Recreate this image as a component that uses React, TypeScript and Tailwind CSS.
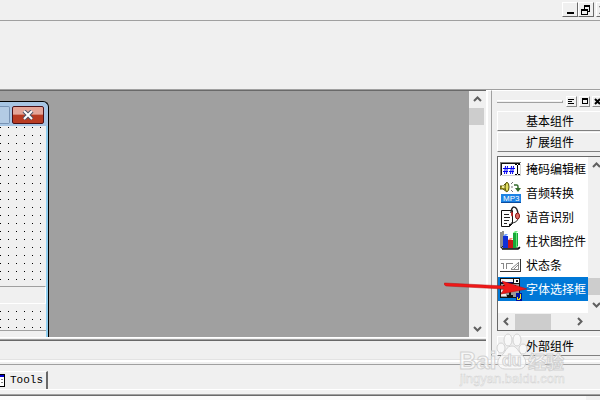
import type { ReactNode } from "react";

const raised =
  "border border-t-white border-l-white border-r-[#696969] border-b-[#696969]";
const cjk = "font-['Noto_Sans_CJK_SC','Liberation_Sans',sans-serif]";

function WindowButton({ label, children }: { label: string; children: ReactNode }) {
  return (
    <button
      aria-label={label}
      className={`flex h-[15px] w-4 shrink-0 items-center justify-center bg-[#f0f0f0] ${raised}`}
    >
      {children}
    </button>
  );
}

function PanelButton({ label, children }: { label: string; children: ReactNode }) {
  return (
    <button
      aria-label={label}
      className="flex h-[11px] w-[11px] shrink-0 items-center justify-center border border-t-white border-l-white border-r-[#8a8a8a] border-b-[#8a8a8a]"
    >
      {children}
    </button>
  );
}

type Direction = "up" | "down" | "left" | "right";

const chevrons: Record<Direction, string> = {
  up: "M1 6l3.5-3.5L8 6",
  down: "M1 3l3.5 3.5L8 3",
  left: "M6 1L2.5 4.5L6 8",
  right: "M3 1l3.5 3.5L3 8",
};

function ScrollArrow({ direction }: { direction: Direction }) {
  return (
    <button
      aria-label={`Scroll ${direction}`}
      className="flex h-[17px] w-[17px] shrink-0 items-center justify-center"
    >
      <svg width="9" height="9" viewBox="0 0 9 9" fill="none" stroke="#606060" strokeWidth="2">
        <path d={chevrons[direction]} />
      </svg>
    </button>
  );
}

function MaskIcon() {
  return (
    <svg width="22" height="20" viewBox="0 0 22 20" shapeRendering="crispEdges">
      <path d="M1 4h20v13H1z" fill="#fff" />
      <path d="M0 3.500h21M.5 3v14" fill="none" stroke="#808080" />
      <path d="M1 4.500h19M1.500 4v12" fill="none" stroke="#111" />
      <path d="M2 16.500h19M20.500 5v12" stroke="#d4d4d4" />
      <path
        d="M5.500 7l-1 8M7.500 7l-1 8M3 9.500h6M3 12.500h5M11.500 7l-1 8M13.500 7l-1 8M9 9.500h6M9 12.500h5"
        stroke="#0000f0"
        shapeRendering="auto"
      />
      <path d="M15 5.500h2M18 5.500h2M17.500 6v9M15 15.500h2M18 15.500h2" stroke="#000" />
    </svg>
  );
}

function AudioIcon() {
  return (
    <svg width="22" height="22" viewBox="0 0 22 22">
      <path d="M0 4h3l4-4v10L3 7H0z" fill="#a8a020" stroke="#55520a" />
      <path d="M2 4l3-1v3L2 6z" fill="#f0eca0" />
      <ellipse cx="7" cy="5" rx="2" ry="4.5" fill="#e4df60" stroke="#55520a" />
      <path d="M11 2l2-2M11 5h2M11 8l2 2" stroke="#777" />
      <path d="M14 3h3q1 0 1 2v2" fill="none" stroke="#356b2c" strokeWidth="1.5" />
      <path d="M15 6h6l-3 4z" fill="#356b2c" />
      <path d="M1 12h20v9H1z" fill="#1c82e4" />
      <path d="M1 20.500h20" stroke="#0b4da0" />
      <text x="3" y="19" fontSize="8" fill="#fff" fontFamily="Liberation Sans">
        MP3
      </text>
    </svg>
  );
}

function SpeechIcon() {
  return (
    <svg width="22" height="22" viewBox="0 0 22 22" fill="none">
      <path d="M1.500 4.500h11v13l-3 3h-8z" fill="#fff" stroke="#111" />
      <path d="M4 8.500h5M4 11.500h6M4 14.500h5M4 17.500h3" stroke="#222" />
      <path d="M9 21v-3l4-1z" fill="#111" />
      <path d="M11 7c0-8 6-8 7 1" stroke="#222" strokeWidth="1.5" />
      <path d="M18 12c0 3-3 5-7 5" stroke="#222" />
      <ellipse cx="17.5" cy="10" rx="2" ry="3" fill="#e07068" stroke="#811" />
      <ellipse cx="12" cy="8" rx="1" ry="2.5" fill="#b22" />
    </svg>
  );
}

function ChartIcon() {
  return (
    <svg width="22" height="22" viewBox="0 0 22 22">
      <path d="M1 2v16h19M1 18l2-2V1" fill="none" stroke="#222" />
      <path d="M3 6h5v12H3z" fill="#1030d8" />
      <path d="M3 6l2-2h3l-2 2z" fill="#70a0ff" />
      <path d="M8 10h5v8H8z" fill="#c81818" />
      <path d="M8 10l2-2h3l-2 2z" fill="#ff8878" />
      <path d="M13 3h5v13l-2 2h-3z" fill="#18a838" />
      <path d="M13 3l2-2h3l-2 2z" fill="#70f080" />
      <path d="M16.500 3v14" fill="none" stroke="#62e878" />
      <path d="M2 19h16l2-2" fill="none" stroke="#111" strokeWidth="1.5" />
    </svg>
  );
}

function StatusIcon() {
  return (
    <svg width="22" height="20" viewBox="0 0 22 20" fill="none" shapeRendering="crispEdges">
      <path d="M0 4.500h21" stroke="#b0b0b0" />
      <path d="M0 16.500h21M20.500 4v13" stroke="#333" />
      <path d="M1 8.500h3M3.500 8v6M6.500 14v-6h6" stroke="#888" />
      <path d="M11 14l7-6M14 14l4-4M11 14.500h8M18.500 7v7" stroke="#888" shapeRendering="auto" />
    </svg>
  );
}

function FontIcon() {
  return (
    <svg width="23" height="24" viewBox="0 0 23 24" shapeRendering="crispEdges">
      <path d="M0 1h20v20H0z" fill="#111" />
      <path d="M1 2h12v3H1z" fill="#f4f4f4" />
      <path d="M1 5h12v1H1z" fill="#10106a" />
      <path d="M14 2h5v4h-5z" fill="#fff" />
      <path d="M16 3h2v2h-2z" fill="#111" />
      <path d="M1 7h18v13H1z" fill="#9a9a9a" />
      <path d="M3 8h13v3h-1v-1h-4v8h2v2H7v-2h2v-8H5v1H3z" fill="#111" />
      <path d="M1 13h5v2H1zM1 17h5v2H1z" fill="#eee" />
      <path d="M16 16h6v8h-6z" fill="#0010a0" />
      <path d="M20.500 17v4h-1v1h-2v-2" fill="none" stroke="#f0e020" />
    </svg>
  );
}

const components = [
  { name: "掩码编辑框", icon: <MaskIcon /> },
  { name: "音频转换", icon: <AudioIcon /> },
  { name: "语音识别", icon: <SpeechIcon /> },
  { name: "柱状图控件", icon: <ChartIcon /> },
  { name: "状态条", icon: <StatusIcon /> },
  { name: "字体选择框", icon: <FontIcon />, selected: true },
];

function CategoryButton({ label }: { label: string }) {
  return (
    <button className="h-5 w-full shrink-0 border-t border-b border-l border-t-white border-l-white border-b-[#808080] pl-[2px] text-center text-xs leading-[18px]">
      {label}
    </button>
  );
}

function ComponentPanel() {
  return (
    <aside className="flex w-[109px] shrink-0 flex-col border-t border-l border-t-white border-l-[#a0a0a0] pl-[5px]">
      <div className="flex h-5 shrink-0 items-center gap-[2px] overflow-hidden">
        <div className="mr-px h-[3px] w-[66px] shrink-0 border-t border-r border-b border-t-white border-r-[#a0a0a0] border-b-[#a0a0a0]" />
        <PanelButton label="Panel menu">
          <svg width="7" height="7" viewBox="0 0 7 7" stroke="#000" shapeRendering="crispEdges">
            <path d="M0 1.500h6M0 3.500h4M0 5.500h6" />
          </svg>
        </PanelButton>
        <PanelButton label="Maximize panel">
          <span className="h-[6px] w-[6px] border border-t-2 border-black" />
        </PanelButton>
        <PanelButton label="Close panel">
          <svg width="7" height="7" viewBox="0 0 7 7" stroke="#000" strokeWidth="2">
            <path d="M1 1l5 5M6 1L1 6" />
          </svg>
        </PanelButton>
      </div>
      <div className="flex flex-col gap-px">
        <CategoryButton label="基本组件" />
        <CategoryButton label="扩展组件" />
      </div>
      <div className="mt-1 mb-[5px] flex shrink-0 flex-col border-t border-b border-l border-[#696969] bg-[#f0f0f0]">
        <div className="flex h-[156px]">
          <ul className="min-w-0 flex-1 overflow-hidden bg-white">
            {components.map((c) => (
              <li
                key={c.name}
                className={`flex h-6 items-center gap-[3px] overflow-hidden pl-[2px] text-xs whitespace-nowrap ${
                  c.selected ? "bg-[#0078d7] text-white" : "text-black"
                }`}
              >
                <span className="flex w-[23px] shrink-0">{c.icon}</span>
                {c.name}
              </li>
            ))}
          </ul>
          <div className="flex w-3 shrink-0 flex-col items-start overflow-hidden">
            <ScrollArrow direction="up" />
            <div className="mt-[104px] h-[17px] w-full bg-[#cdcdcd]" />
            <div className="flex-1" />
            <ScrollArrow direction="down" />
          </div>
        </div>
        <div className="flex h-[17px] items-center">
          <ScrollArrow direction="left" />
          <div className="h-4 w-9 bg-[#cdcdcd]" />
          <div className="w-5" />
          <ScrollArrow direction="right" />
        </div>
      </div>
      <CategoryButton label="外部组件" />
    </aside>
  );
}

// alignment grid of the form designer, one dot every 8px
function DotGrid({ id, top }: { id: string; top: number }) {
  return (
    <svg width="100%" height="100%" shapeRendering="crispEdges">
      <pattern id={id} y={top} width="8" height="8" patternUnits="userSpaceOnUse">
        <path d="M0 0h1v1H0z" />
      </pattern>
      <rect width="44" height="100%" fill={`url(#${id})`} />
    </svg>
  );
}

function FormWindow() {
  return (
    <div className="mt-[10px] flex h-[236px] w-[49px] flex-col rounded-tr-md border-t border-r border-black bg-[#a8c6e4]">
      <div className="flex h-6 shrink-0 items-start gap-[2px] pt-1">
        <button
          aria-label="Maximize"
          className="h-[18px] w-[10px] rounded-r-xs border border-l-0 border-[#7893b4] bg-[#b3cbe4]"
        />
        <button
          aria-label="Close"
          className="flex h-[18px] w-8 items-center justify-center rounded-xs border border-[#4a1018] bg-linear-to-b from-[#e4a598] from-45% to-[#b83b22] to-50%"
        >
          <svg width="12" height="10" viewBox="0 0 12 10">
            <path d="M2 1l8 8M10 1L2 9" stroke="#4c5266" strokeWidth="4" />
            <path d="M2 1l8 8M10 1L2 9" stroke="#fff" strokeWidth="2" />
          </svg>
        </button>
      </div>
      <div className="flex flex-1 flex-col border-r-2 border-[#8fcdee] bg-[#f0f0f0]">
        <div className="h-[160px]">
          <DotGrid id="client-dots" top={1} />
        </div>
        <div className="h-[18px] border-t border-r border-b border-t-[#a0a0a0] border-r-white border-b-white" />
        <div className="h-[26px]">
          <DotGrid id="lower-dots" top={7} />
        </div>
        <div className="flex-1 border-t border-[#a0a0a0]" />
      </div>
    </div>
  );
}

function Watermark() {
  return (
    <div className="pointer-events-none absolute right-[31px] bottom-3">
      <svg width="110" height="56" viewBox="0 0 110 56" fill="#fafafa" fillOpacity="0.8" stroke="#d2d2d2">
        <ellipse cx="42" cy="16" rx="4" ry="5" />
        <ellipse cx="49" cy="8" rx="4" ry="6" />
        <ellipse cx="58" cy="8" rx="4" ry="6" />
        <ellipse cx="64" cy="17" rx="4" ry="5" />
        <path d="M53 14c-6 0-6 6-11 10-6 5-3 13 4 13h14c7 0 9-8 4-13-5-4-6-10-11-10z" />
        <g fontFamily="Liberation Sans" fontWeight="700">
          <text x="0" y="37" fontSize="24">Bai</text>
          <text x="43" y="34" fontSize="16">du</text>
          <text x="69" y="37" fontSize="18" fontFamily="Noto Sans CJK SC">经验</text>
          <text x="1" y="51" fontSize="13" fontWeight="400" strokeWidth="0.5">
            jingyan.baidu.com
          </text>
        </g>
      </svg>
    </div>
  );
}

export default function App() {
  return (
    <div className={`relative flex min-h-screen flex-col overflow-hidden bg-[#f0f0f0] text-xs text-black ${cjk}`}>
      <header className="flex h-[21px] shrink-0 justify-end overflow-hidden border-b border-[#a0a0a0] pt-[2px]">
        <WindowButton label="Minimize">
          <span className="mt-[7px] h-[2px] w-[7px] bg-black" />
        </WindowButton>
        <WindowButton label="Restore">
          <svg width="10" height="10" viewBox="0 0 10 10" fill="none" stroke="#000" shapeRendering="crispEdges">
            <path d="M3 .5h6M3 1.500h6M3.500 1v3M8.500 1v5.500H7M0 4.500h7M0 5.500h7M.5 4v5.500h6V4" />
          </svg>
        </WindowButton>
        <div className="ml-[2px] flex w-1 overflow-hidden">
          <WindowButton label="Close">
            <svg width="10" height="8" viewBox="0 0 10 8" stroke="#000" strokeWidth="2">
              <path d="M1 0l7 8M8 0L1 8" />
            </svg>
          </WindowButton>
        </div>
      </header>
      <div className="h-[69px] shrink-0 border-b border-[#a0a0a0]" />
      <main className="flex h-[269px] shrink-0">
        <div className="flex min-w-0 flex-1 flex-col">
          <div className="flex h-[247px] border-t border-[#696969] bg-[#a0a0a0]">
            <div className="flex-1">
              <FormWindow />
            </div>
            <div className="flex w-[17px] shrink-0 flex-col bg-[#f0f0f0]">
              <ScrollArrow direction="up" />
              <div className="h-[17px] w-[15px] bg-[#cdcdcd]" />
              <div className="flex-1" />
              <ScrollArrow direction="down" />
            </div>
          </div>
          <div className="h-1 border-t border-b border-t-white border-b-[#696969] pt-px">
            <div className="h-px bg-[#a0a0a0]" />
          </div>
        </div>
        <div className="w-[5px] shrink-0 border-t border-l-2 border-white" />
        <ComponentPanel />
      </main>
      <div className="h-[6px] shrink-0 border-t border-b border-t-[#e3e3e3] border-b-[#a0a0a0]">
        <div className="h-[2px] bg-white" />
      </div>
      <footer className="flex h-[31px] shrink-0 flex-col border-b border-[#696969]">
        <button className="mt-[6px] flex h-[18px] w-12 items-center gap-[5px] border-t border-r-2 border-t-white border-r-[#696969] font-['Liberation_Mono',monospace] text-[11px]">
          <svg width="5" height="13" viewBox="0 0 5 13" shapeRendering="crispEdges">
            <path d="M0 0h5v13H0z" fill="#000" />
            <path d="M0 1h4v11H0z" fill="#fff" />
            <path d="M0 1h4v2H0z" fill="#0000d0" />
            <path d="M1 5h2v1H1zM1 8h2v1H1z" fill="#888" />
          </svg>
          Tools
        </button>
        <div className="h-px bg-white" />
        <div className="flex-1 border-b border-[#a0a0a0]" />
      </footer>
      <div className="mr-[14px] flex-1 bg-[#fafafa]" />
      <Watermark />
      {/* callout arrow */}
      <svg className="absolute top-[278px] right-[73px]" width="83" height="22" viewBox="0 0 83 22">
        <path d="M0 5.500Q0 5 1 5l60 3-3-5 25 8-26 5 3-5-58-3Q0 7 0 5.500z" fill="#f01818" stroke="#b81010" strokeWidth="0.5" />
      </svg>
    </div>
  );
}
